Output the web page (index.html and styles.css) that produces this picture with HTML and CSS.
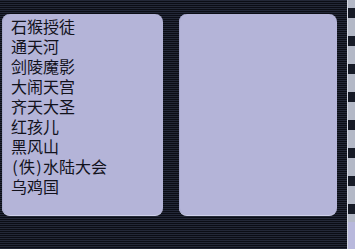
FILE: index.html
```html
<!DOCTYPE html>
<html lang="zh">
<head>
<meta charset="utf-8">
<title>Chapters</title>
<link rel="stylesheet" href="styles.css">
</head>
<body>
<div class="screen">
  <div class="panel left">
    <ul class="list">
      <li>石猴授徒</li>
      <li>通天河</li>
      <li>剑陵魔影</li>
      <li>大闹天宫</li>
      <li>齐天大圣</li>
      <li>红孩儿</li>
      <li>黑风山</li>
      <li><span class="paren">(</span>佚<span class="paren">)</span>水陆大会</li>
      <li>乌鸡国</li>
    </ul>
  </div>
  <div class="panel right"></div>
  <div class="rail"></div>
</div>
</body>
</html>
```
FILE: styles.css
```css
html, body {
  margin: 0;
  padding: 0;
}
body {
  width: 355px;
  height: 249px;
  overflow: hidden;
  background: #0c0e16;
}
.screen {
  display: flex;
  align-items: flex-start;
  width: 355px;
  height: 249px;
  background: repeating-linear-gradient(to bottom, #232838 0, #232838 1px, #0b0d15 1px, #0b0d15 2px);
}
.panel {
  margin-top: 14px;
  height: 201px;
  background: #b4b4d8;
  border-radius: 8px;
  border-bottom: 1px solid #cfd0ea;
  box-shadow: inset 1px 0 0 #a6a8cc;
}
.left {
  margin-left: 2px;
  width: 161px;
}
.right {
  margin-left: 16px;
  width: 158px;
}
.list {
  list-style: none;
  margin: 0;
  padding: 2px 0 0 9px;
  font-family: "Noto Sans CJK SC", "Noto Sans", sans-serif;
  font-size: 16px;
  line-height: 20px;
  color: #12121c;
}
.paren {
  display: inline-block;
  width: 8px;
  text-align: center;
}
.rail {
  margin-left: 10px;
  width: 7px;
  height: 249px;
  border-left: 1px solid #d6d9e4;
  background:
    linear-gradient(to bottom, transparent 0, transparent 222px, #b8b8dc 222px, #b8b8dc 249px),
    repeating-linear-gradient(to bottom, #b3b8c6 0, #b3b8c6 8px, #161a26 8px, #161a26 18px, #b3b8c6 18px, #b3b8c6 28px);
}
```
